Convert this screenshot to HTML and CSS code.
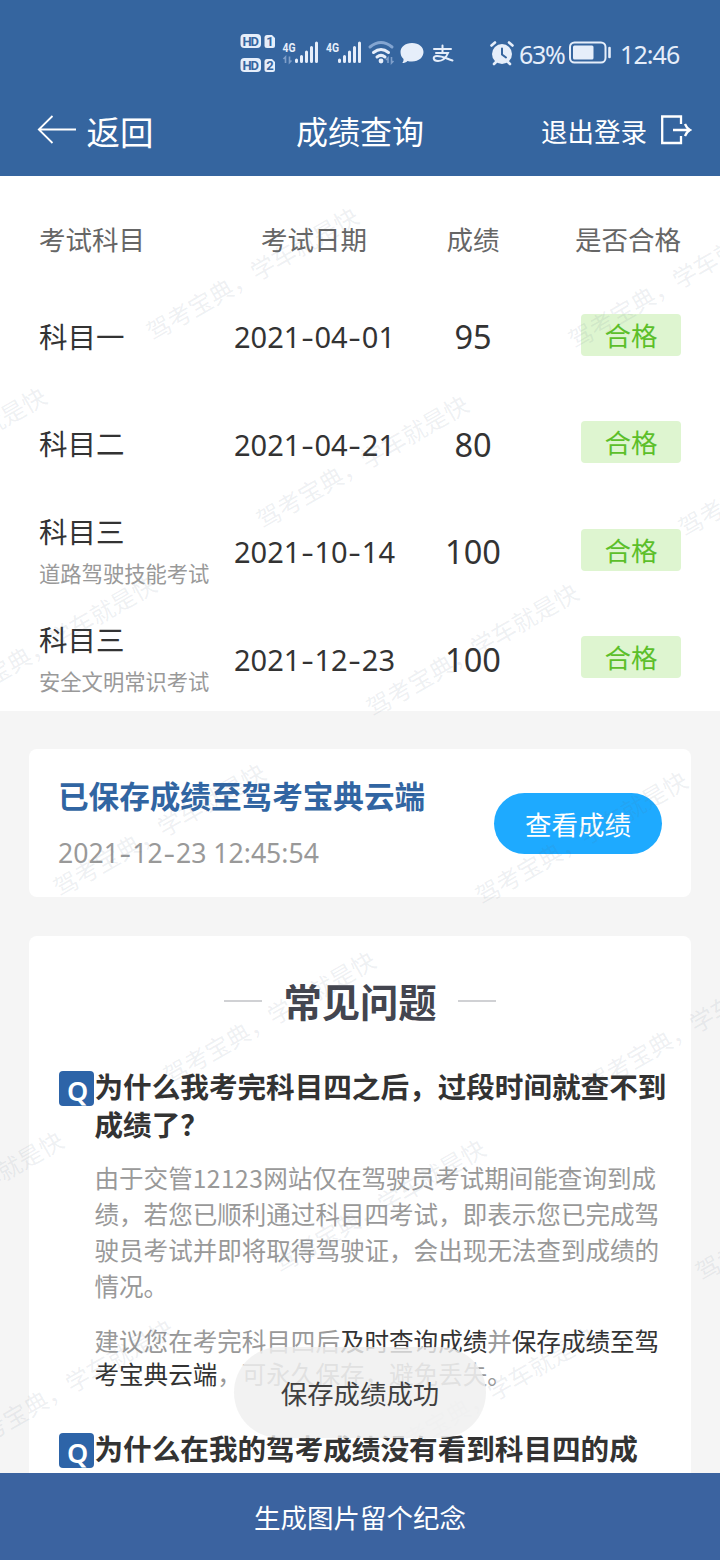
FILE: index.html
```html
<!DOCTYPE html>
<html lang="zh-CN">
<head>
<meta charset="utf-8">
<title>成绩查询</title>
<link rel="stylesheet" href="styles.css">
</head>
<body>
<div class="app">
  <header class="top">
    <div class="status">
      <svg class="status-left" width="230" height="50" viewBox="230 30 230 50">
        <g fill="#e6eefa">
          <rect x="240.500" y="34" width="20.500" height="14" rx="4"/>
          <path d="M267 35h5l3 3v8q0 2-2 2h-6q-2.500 0-2.500-2.500v-8q0-2.500 2.500-2.500z"/>
          <rect x="240.500" y="58" width="20.500" height="14" rx="4"/>
          <path d="M267 59h5l3 3v8q0 2-2 2h-6q-2.500 0-2.500-2.500v-8q0-2.500 2.500-2.500z"/>
        </g>
        <g class="hd">
          <text x="242.5" y="45.600" textLength="16.5">HD</text><text x="266.2" y="46.4">1</text>
          <text x="242.5" y="69.600" textLength="16.5">HD</text><text x="266.2" y="70.4">2</text>
        </g>
        <g class="net">
          <text x="282.5" y="51.5" textLength="13" lengthAdjust="spacingAndGlyphs">4G</text>
          <text x="326" y="51.5" textLength="13" lengthAdjust="spacingAndGlyphs">4G</text>
        </g>
        <g stroke="#e6eefa" stroke-width="3" stroke-linecap="round">
          <path d="M296.500 60v1.500M301.500 56.500v5M306.500 52v9.500M311.500 47.500v14M316.500 43v18.500"/>
          <path d="M339.500 60v1.500M344.500 56.500v5M349.500 52v9.500M354.500 47.500v14M359.500 43v18.500"/>
        </g>
        <g stroke="#7f9fca" stroke-width="1.600" fill="none">
          <path d="M285.500 63v-6l-2 2M289.500 56.500v6l2-2M388 63v-5l-2 2M391.500 57v6l2-2"/>
        </g>
        <g fill="none" stroke-width="3" stroke-linecap="round">
          <path d="M370 47q11-9 22 0" stroke="#83a5d1"/>
          <path d="M373.500 52.500q7.500-6 15 0M377 57q4-3.200 8 0" stroke="#e6eefa"/>
        </g>
        <circle cx="381" cy="61" r="2.400" fill="#e6eefa"/>
        <path d="M412 43c7 0 11.500 4 11.500 9s-4.500 9.500-11.500 9.500c-2 0-3-.2-4.500-.6-1.500 1.400-3 2.100-5.200 2.100 1-1.200 1.300-2.300 1.200-4-2-1.800-3-4-3-7 0-5 4.500-9 11.500-9z" fill="#e6eefa"/>
        <g fill="none" stroke="#e6eefa" stroke-width="2" stroke-linecap="round">
          <path d="M434 49h17M442.500 45.500v7M436 53h12c-2 5-6 8-10 8-5 0-6-5-1-5 6 0 10 3 15.500 4.500"/>
        </g>
      </svg>
      <svg class="alarm" width="26" height="26" viewBox="0 0 26 26">
        <circle cx="13" cy="14" r="10" fill="#e6eefa"/>
        <path d="M2.500 5.500l3.500-3M23.500 5.500l-3.500-3M5 24l3-3M21 24l-3-3" stroke="#e6eefa" stroke-width="2.600" stroke-linecap="round"/>
        <path d="M13 8.500v6l4 3" fill="none" stroke="#35659f" stroke-width="2" stroke-linecap="round"/>
      </svg>
      <span class="pct">63%</span>
      <svg class="battery" width="43" height="24" viewBox="0 0 43 24">
        <rect x="1" y="1.500" width="35.500" height="20" rx="4.500" fill="none" stroke="#e6eefa" stroke-width="2"/>
        <rect x="4" y="4.500" width="20.500" height="14" rx="1.500" fill="#e6eefa"/>
        <path d="M40.500 7v9" stroke="#e6eefa" stroke-width="2.600" stroke-linecap="round"/>
      </svg>
      <span class="clock">12:46</span>
    </div>
    <nav class="nav">
      <div class="back">
        <svg width="40" height="30" viewBox="0 0 40 30"><path d="M39 15.500H2M15.500 2L1.800 15.500l13.700 13.500" fill="none" stroke="#fff" stroke-width="1.800"/></svg>
        <span>返回</span>
      </div>
      <h1 class="title">成绩查询</h1>
      <div class="logout">
        <span>退出登录</span>
        <svg width="32" height="30" viewBox="0 0 32 30"><path d="M21 9V1.500H2.200v26.500H21v-7M13 15H30M25 9q1.500 4 5 6-3.500 2-5 6" fill="none" stroke="#fff" stroke-width="2.300"/></svg>
      </div>
    </nav>
  </header>

  <main class="content">
    <section class="scores">
      <div class="row head"><span>考试科目</span><span class="c-date">考试日期</span><span class="c-score">成绩</span><span class="c-pass">是否合格</span></div>
      <div class="row"><div class="subject">科目一</div><div class="c-date date">2021<i>-</i>04<i>-</i>01</div><div class="c-score score">95</div><div class="c-pass"><b class="badge">合格</b></div></div>
      <div class="row"><div class="subject">科目二</div><div class="c-date date">2021<i>-</i>04<i>-</i>21</div><div class="c-score score">80</div><div class="c-pass"><b class="badge">合格</b></div></div>
      <div class="row"><div class="subject two">科目三<small>道路驾驶技能考试</small></div><div class="c-date date">2021<i>-</i>10<i>-</i>14</div><div class="c-score score">100</div><div class="c-pass"><b class="badge">合格</b></div></div>
      <div class="row"><div class="subject two">科目三<small>安全文明常识考试</small></div><div class="c-date date">2021<i>-</i>12<i>-</i>23</div><div class="c-score score">100</div><div class="c-pass"><b class="badge">合格</b></div></div>
    </section>

    <section class="card saved">
      <div>
        <h2 class="saved-title">已保存成绩至驾考宝典云端</h2>
        <div class="saved-time">2021<i>-</i>12<i>-</i>23 12:45:54</div>
      </div>
      <button class="view">查看成绩</button>
    </section>

    <section class="card faq">
      <h2 class="faq-title"><span>常见问题</span></h2>
      <article class="qa">
        <span class="q">Q</span>
        <div>
          <h3>为什么我考完科目四之后，过段时间就查不到<br>成绩了？</h3>
          <p class="p1">由于交管<span class="num">12123</span>网站仅在驾驶员考试期间能查询到成<br>绩，若您已顺利通过科目四考试，即表示您已完成驾<br>驶员考试并即将取得驾驶证，会出现无法查到成绩的<br>情况。</p>
          <p class="p2">建议您在考完科目四后<em>及时查询成绩</em>并<em>保存成绩至驾<br>考宝典云端</em>，可永久保存，避免丢失。</p>
        </div>
      </article>
      <article class="qa">
        <span class="q">Q</span>
        <div><h3>为什么在我的驾考成绩没有看到科目四的成</h3></div>
      </article>
    </section>

    <svg class="watermark" width="720" height="1297" viewBox="0 176 720 1297">
      <defs><text id="wm" x="-9" y="9.500" transform="rotate(-30)">驾考宝典，学车就是快</text></defs>
      <use href="#wm" x="156" y="329"/><use href="#wm" x="578" y="337"/>
      <use href="#wm" x="-156" y="509"/><use href="#wm" x="266" y="517"/><use href="#wm" x="688" y="525"/>
      <use href="#wm" x="-46" y="697"/><use href="#wm" x="376" y="705"/>
      <use href="#wm" x="63" y="885"/><use href="#wm" x="485" y="893"/>
      <use href="#wm" x="173" y="1073"/><use href="#wm" x="595" y="1081"/>
      <use href="#wm" x="-139" y="1253"/><use href="#wm" x="283" y="1261"/><use href="#wm" x="705" y="1269"/>
      <use href="#wm" x="-29" y="1441"/><use href="#wm" x="393" y="1449"/>
    </svg>
  </main>

  <footer class="bottom">生成图片留个纪念</footer>
  <div class="toast">保存成绩成功</div>
</div>
</body>
</html>
```
FILE: styles.css
```css
* { box-sizing: border-box; margin: 0; padding: 0; }
body { font-family: "Noto Sans CJK SC", sans-serif; color: #333; background: #f5f5f5; }
i, em { font-style: normal; }
svg { display: block; flex: none; }

.app { position: relative; width: 720px; height: 1560px; display: flex; flex-direction: column; overflow: hidden; }

.top { flex: none; height: 176px; background: #35659f; color: #fff; }
.status { height: 88px; padding: 30px 0 0 230px; display: flex; align-items: flex-start; font-family: "Noto Sans", sans-serif; font-size: 25px; line-height: 48px; color: #e6eefa; white-space: nowrap; }
.hd { font: bold 13px Roboto, sans-serif; fill: #35659f; }
.net { font: bold 13.500px Roboto, sans-serif; fill: #e6eefa; }
.alarm { margin: 10px 0 0 29px; }
.pct { width: 46px; margin-left: 4px; letter-spacing: -1.300px; }
.battery { margin: 11px 0 0 4px; }
.clock { margin-left: 8px; letter-spacing: -0.900px; }

.nav { height: 88px; padding: 0 28px 0 37px; display: grid; grid-template-columns: 1fr auto 1fr; align-items: center; line-height: 44px; }
.back { display: flex; align-items: center; gap: 9.500px; font-size: 33.500px; margin-top: -6px; }
.back span { padding-top: 3px; }
.title { font-size: 32px; font-weight: 400; margin-left: -9px; margin-top: -4px; }
.logout { display: flex; align-items: center; justify-content: flex-end; gap: 13px; font-size: 26.500px; margin-top: -5px; }
.logout span { padding-top: 2px; }

.content { position: relative; flex: none; height: 1297px; overflow: hidden; }
.scores { height: 535px; background: #fff; padding: 22px 39px 0; }
.row { display: grid; grid-template-columns: 195px 161px 158px 128px; align-items: center; height: 107.500px; }
.row.head { height: 85px; padding-bottom: 3px; font-size: 26.500px; line-height: 40px; color: #666; }
.c-date { white-space: nowrap; }
.head .c-date { padding-left: 27px; }
.c-score { text-align: center; margin-left: -2px; }
.c-pass { display: flex; justify-content: flex-end; }
.subject { margin-top: -2px; font-size: 28.500px; line-height: 42px; white-space: nowrap; }
.subject.two { margin-top: 1px; }
.subject small { display: block; font-size: 21.300px; line-height: 42px; color: #999; }
.date { font-family: "Noto Sans", sans-serif; font-size: 29px; }
.date i, .saved-time i { display: inline-block; transform: scaleX(1.35); margin: 0 2.400px; }
.score { font-family: "Noto Sans", sans-serif; font-size: 32.500px; }
.badge { width: 100px; height: 42px; margin-top: -4px; border-radius: 4px; background: #def5d0; color: #5cbf2a; font-size: 26.500px; font-weight: 400; line-height: 42px; text-align: center; }

.card { width: 662px; margin-left: 29px; background: #fff; border-radius: 8px; }
.saved { height: 148px; margin-top: 38px; padding: 0 29px; display: flex; justify-content: space-between; align-items: center; }
.saved-title { margin-top: 1px; font-size: 30.600px; line-height: 46px; color: #3165a2; font-weight: 700; }
.saved-time { margin-top: 12px; font-family: "Noto Sans", sans-serif; font-size: 26.600px; line-height: 46px; color: #999; }
.view { width: 168px; height: 61px; border: 0; border-radius: 31px; background: #1eaaff; color: #fff; font: 26.500px/61px "Noto Sans CJK SC", sans-serif; }

.faq { margin-top: 39px; height: 620px; padding: 38px 0 0 30px; }
.faq-title { display: flex; justify-content: center; align-items: center; gap: 21px; padding-right: 30px; font-size: 38.300px; line-height: 54px; color: #43454f; }
.faq-title::before, .faq-title::after { content: ""; width: 38px; height: 2px; background: #d0d1d4; margin-top: -1px; }
.qa { display: flex; margin-top: 39px; }
.q { flex: none; width: 35px; height: 35px; margin: 4px 0.500px 0 0; padding-left: 2px; border-radius: 4px; background: #2d64a8; color: #fff; font: 600 27px/39px "Noto Sans", sans-serif; text-align: center; }
.qa h3 { font-size: 28.600px; line-height: 38px; font-weight: 700; white-space: nowrap; }
.qa p { font-size: 24.560px; color: #999; white-space: nowrap; }
.qa .num { letter-spacing: 0.500px; }
.p1 { margin-top: 17px; line-height: 36px; }
.p2 { margin-top: 20px; line-height: 33px; }
.p2 em { color: #333; }
.qa + .qa { margin-top: 38.500px; }

.watermark { position: absolute; left: 0; top: 0; pointer-events: none; font-size: 24px; fill: rgba(90, 110, 130, 0.1); }

.bottom { flex: none; height: 87px; background: #3b63a0; color: #fff; font-size: 26.500px; line-height: 88px; text-align: center; }
.toast { position: absolute; left: 234px; top: 1347px; width: 252px; height: 91px; border-radius: 46px; background: rgba(239, 239, 239, 0.83); color: #404040; font-size: 26.400px; line-height: 92px; text-align: center; }
```
